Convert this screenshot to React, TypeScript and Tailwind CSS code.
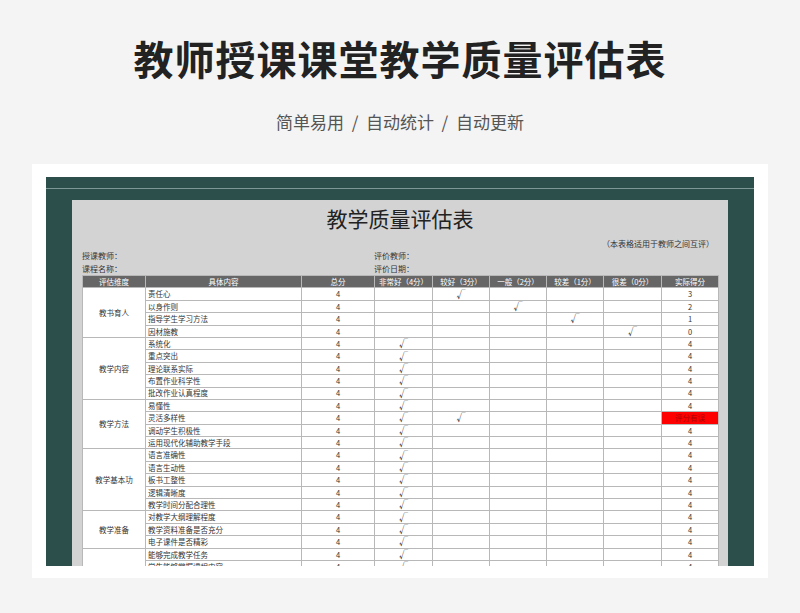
const groups: { name: string; items: string[] }[] = [
  { name: '教书育人', items: ['责任心', '以身作则', '指导学生学习方法', '因材施教'] },
  { name: '教学内容', items: ['系统化', '重点突出', '理论联系实际', '布置作业科学性', '批改作业认真程度'] },
  { name: '教学方法', items: ['易懂性', '灵活多样性', '调动学生积极性', '运用现代化辅助教学手段'] },
  { name: '教学基本功', items: ['语言准确性', '语言生动性', '板书工整性', '逻辑清晰度', '教学时间分配合理性'] },
  { name: '教学准备', items: ['对教学大纲理解程度', '教学资料准备是否充分', '电子课件是否精彩'] },
  { name: '', items: ['能够完成教学任务', '学生能够掌握课程内容', ''] },
];

const widths = [63, 156, 73, 58, 57, 57, 57, 58, 57];
const heads = ['评估维度', '具体内容', '总分', '非常好（4分）', '较好（3分）', '一般（2分）', '较差（1分）', '很差（0分）', '实际得分'];

function marks(g: number, i: number): { checks: number[]; score: string } {
  if (g === 0) return { checks: [i + 1], score: String(3 - i) };
  if (g === 2 && i === 1) return { checks: [0, 1], score: '评分有误' };
  return { checks: [0], score: '4' };
}

const cell = 'border border-[#b8b8b8] h-[12.4px] p-0 leading-none';

export default function App() {
  return (
    <div className="w-[800px] h-[613px] bg-[#f4f4f4] flex flex-col items-center overflow-hidden" style={{ fontFamily: '"Noto Sans CJK SC", "Noto Sans", sans-serif' }}>
      <h1 className="mt-[32px] text-[40px] font-bold text-[#222] leading-[52px] tracking-[1px]">教师授课课堂教学质量评估表</h1>
      <p className="mt-[26px] text-[17px] text-[#555] leading-6 whitespace-pre">简单易用  /  自动统计  /  自动更新</p>
      <div className="mt-[30px] w-[736px] h-[414px] bg-white pt-[13px] px-[14px]">
        <div className="h-[389px] bg-[#2c4f4b] pt-[11px] overflow-hidden">
          <div className="border-t border-[#7d9894] pt-[11px] px-[26px]">
            <div className="bg-[#d3d3d3] h-[400px] px-[10px] text-[#333]">
              <div className="text-center text-[21px] leading-[32px] pt-[2px] text-[#222]">教学质量评估表</div>
              <div className="text-right text-[8px] leading-[12px] mr-[4px] mt-[4px]">（本表格适用于教师之间互评）</div>
              <div className="flex text-[8px] leading-[12.5px]">
                <div className="w-[292px]"><div>授课教师：</div><div>课程名称：</div></div>
                <div><div>评价教师：</div><div>评价日期：</div></div>
              </div>
              <table className="border-collapse table-fixed text-[7.5px] bg-white" style={{ width: 636 }}>
                <colgroup>{widths.map((w, i) => <col key={i} style={{ width: w }} />)}</colgroup>
                <thead>
                  <tr className="bg-[#666] text-white">
                    {heads.map((h) => <th key={h} className="border border-[#b8b8b8] h-[12.4px] p-0 font-normal leading-none">{h}</th>)}
                  </tr>
                </thead>
                <tbody>
                  {groups.map((g, gi) => g.items.map((it, i) => {
                    const m = marks(gi, i);
                    return (
                      <tr key={gi + '-' + i}>
                        {i === 0 && <td rowSpan={g.items.length} className={cell + ' text-center'}>{g.name}</td>}
                        <td className={cell + ' text-left pl-[2px]'}>{it}</td>
                        <td className={cell + ' text-center'}>4</td>
                        {[0, 1, 2, 3, 4].map((c) => (
                          <td key={c} className={cell + ' text-center text-[9px]'}>{m.checks.includes(c) ? '√' : ''}</td>
                        ))}
                        <td className={cell + ' text-center ' + (m.score === '评分有误' ? 'bg-[#ff0000] text-[#a00]' : '')}>{m.score}</td>
                      </tr>
                    );
                  }))}
                </tbody>
              </table>
            </div>
          </div>
        </div>
      </div>
    </div>
  );
}
